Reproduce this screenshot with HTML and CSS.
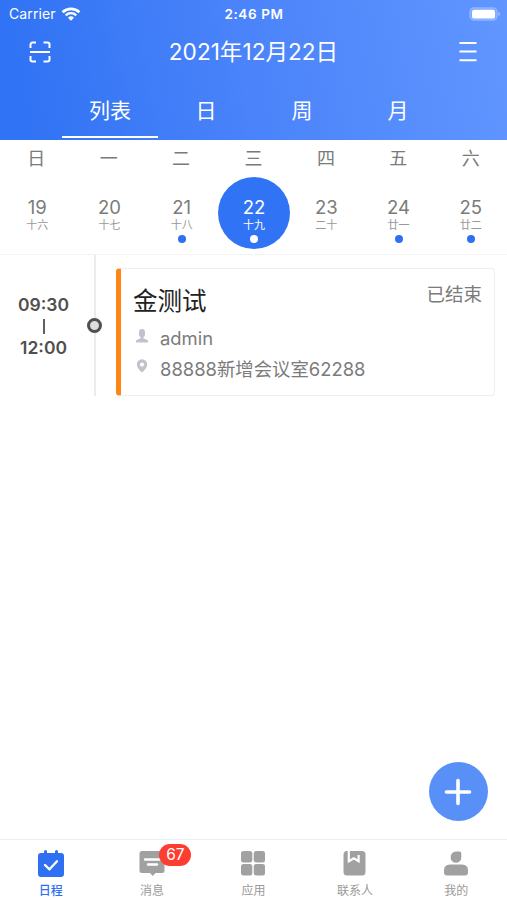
FILE: index.html
```html
<!DOCTYPE html>
<html lang="zh-CN">
<head>
    <meta charset="UTF-8">
    <meta name="viewport" content="width=device-width, initial-scale=1.0">
    <title>日程</title>
    <link rel="stylesheet" href="styles.css">
</head>
<body>
    <header class="header">
        <div class="status-bar">
            <div class="carrier">
                <span>Carrier</span>
                <svg width="20" height="14" viewBox="0 0 20 14">
                    <path d="M1.6 5.2a12.2 12.2 0 0 1 16.8 0" fill="none" stroke="#fff" stroke-width="2.7"/>
                    <path d="M4.7 8.3a7.7 7.7 0 0 1 10.6 0" fill="none" stroke="#fff" stroke-width="2.3"/>
                    <path d="M10 13.8 7 10.8a4.3 4.3 0 0 1 6 0z" fill="#fff"/>
                </svg>
            </div>
            <div class="time">2:46 PM</div>
            <div class="battery">
                <svg width="32" height="14" viewBox="0 0 32 14">
                    <rect x="0.8" y="0.8" width="27.4" height="12.4" rx="4" fill="#fff" fill-opacity="0.2" stroke="#fff" stroke-opacity="0.2" stroke-width="1.4"/>
                    <rect x="3" y="2.8" width="23" height="8.8" rx="2.2" fill="#fff"/>
                    <path d="M29.5 5v4q1.6-.6 1.6-2t-1.6-2z" fill="#fff" fill-opacity="0.45"/>
                </svg>
            </div>
        </div>

        <div class="title-bar">
            <svg width="22" height="22" viewBox="0 0 22 22" fill="none" stroke="#fff" stroke-width="2">
                <path d="M1.5 7V3.5a2 2 0 0 1 2-2H7M14.5 1.5h4a2 2 0 0 1 2 2V7M1.5 15v3.5a2 2 0 0 0 2 2H7M14.5 20.5h4a2 2 0 0 0 2-2V15M1 11h20"/>
            </svg>
            <h1>2021年12月22日</h1>
            <svg width="18" height="22" viewBox="0 0 18 22" stroke="#fff" stroke-width="2">
                <path d="M.5 2H17.5M.5 10.6H17.5M.5 19.2H17.5"/>
            </svg>
        </div>

        <nav class="tabs">
            <a class="tab active">列表</a>
            <a class="tab">日</a>
            <a class="tab">周</a>
            <a class="tab">月</a>
        </nav>
    </header>

    <section class="calendar">
        <div class="weekdays">
            <span>日</span><span>一</span><span>二</span><span>三</span><span>四</span><span>五</span><span>六</span>
        </div>
        <div class="days">
            <div class="day"><b>19</b><small>十六</small></div>
            <div class="day"><b>20</b><small>十七</small></div>
            <div class="day"><b>21</b><small>十八</small><i class="dot"></i></div>
            <div class="day selected"><b>22</b><small>十九</small><i class="dot"></i></div>
            <div class="day"><b>23</b><small>二十</small></div>
            <div class="day"><b>24</b><small>廿一</small><i class="dot"></i></div>
            <div class="day"><b>25</b><small>廿二</small><i class="dot"></i></div>
        </div>
    </section>

    <main class="schedule">
        <div class="event">
            <div class="event-time">
                <span>09:30</span>
                <span class="bar"></span>
                <span>12:00</span>
            </div>
            <div class="timeline"><span class="node"></span></div>
            <div class="card">
                <div class="card-head">
                    <h2>金测试</h2>
                    <span class="state">已结束</span>
                </div>
                <div class="info">
                    <svg width="12" height="14" viewBox="0 0 12 14" fill="#bfc3cc">
                        <rect x="3" y="0" width="6" height="8.2" rx="3"/>
                        <path d="M4.6 7h2.8v2.2l4 1.8q.6.4.6 1V13.6H0V12q0-.6.6-1l4-1.8z"/>
                    </svg>
                    <span>admin</span>
                </div>
                <div class="info">
                    <svg width="12" height="14" viewBox="0 0 12 14" fill="#bfc3cc">
                        <path fill-rule="evenodd" d="M6 .3a5.2 5.2 0 0 1 5.2 5.2c0 3-2.7 5.7-5.2 8-2.5-2.3-5.2-5-5.2-8A5.2 5.2 0 0 1 6 .3zm0 3.2a2.1 2.1 0 1 0 0 4.2 2.1 2.1 0 0 0 0-4.2z"/>
                    </svg>
                    <span>88888新增会议室62288</span>
                </div>
            </div>
        </div>
    </main>

    <button class="add">
        <svg width="28" height="28" viewBox="0 0 28 28" stroke="#fff" stroke-width="3.6" stroke-linecap="round">
            <path d="M14 2.5V25.5M2.5 14H25.5"/>
        </svg>
    </button>

    <footer class="tabbar">
        <a class="item active">
            <svg width="28" height="28" viewBox="0 0 28 28">
                <path d="M4 3h3V1.5a1.5 1.5 0 0 1 3 0V3h8V1.5a1.5 1.5 0 0 1 3 0V3h3a3 3 0 0 1 3 3v18a3 3 0 0 1-3 3H4a3 3 0 0 1-3-3V6a3 3 0 0 1 3-3z" fill="#2f6ff2"/>
                <path d="M8 15l4.500 4.300 7.500-8" fill="none" stroke="#fff" stroke-width="2.400" stroke-linecap="round" stroke-linejoin="round"/>
            </svg>
            <span>日程</span>
        </a>
        <a class="item">
            <svg width="28" height="28" viewBox="0 0 28 28">
                <path d="M4 1h20a2.5 2.5 0 0 1 2.5 2.5v17A2.5 2.5 0 0 1 24 23h-6.5L14.800 26 12 23H4a2.5 2.5 0 0 1-2.5-2.5v-17A2.5 2.5 0 0 1 4 1z" fill="#a1a1a1"/>
                <path d="M7 9.5h15M10 14.5h9" stroke="#fff" stroke-width="2.4" stroke-linecap="round"/>
            </svg>
            <em class="badge">67</em>
            <span>消息</span>
        </a>
        <a class="item">
            <svg width="28" height="28" viewBox="0 0 28 28" fill="#a1a1a1">
                <rect x="2" y="1" width="11.3" height="11.5" rx="2.5"/>
                <rect x="14.7" y="1" width="11.3" height="11.5" rx="2.5"/>
                <rect x="2" y="14" width="11.3" height="11.5" rx="2.5"/>
                <rect x="14.7" y="14" width="11.3" height="11.5" rx="2.5"/>
            </svg>
            <span>应用</span>
        </a>
        <a class="item">
            <svg width="28" height="28" viewBox="0 0 28 28">
                <rect x="2.5" y="1" width="22" height="24.5" rx="3.5" fill="#a1a1a1"/>
                <path d="M7.800 1v10.200l5-3 4.800 3V5" fill="none" stroke="#fff" stroke-width="2.200"/>
            </svg>
            <span>联系人</span>
        </a>
        <a class="item">
            <svg width="28" height="28" viewBox="0 0 28 28" fill="#a1a1a1">
                <path d="M14 1.5h3.5q1.8 0 1.8 2v4a5.3 5.3 0 0 1-10.6 0A5.5 5.5 0 0 1 14 1.5z"/>
                <path d="M8 14.5h12q6 0 6 6v2q0 3-3 3H5q-3 0-3-3v-2q0-6 6-6z"/>
            </svg>
            <span>我的</span>
        </a>
    </footer>
</body>
</html>
```

FILE: styles.css
```css
* {
    margin: 0;
    padding: 0;
    box-sizing: border-box;
}

body {
    display: flex;
    flex-direction: column;
    height: 100vh;
    background: #fff;
    color: #7b7b7b;
    font-family: Inter, 'Noto Sans CJK SC', sans-serif;
    overflow: hidden;
}

svg {
    display: block;
    flex: none;
}

.header {
    height: 140px;
    background: linear-gradient(80deg, #3073f4 5%, #4a83fa 48%, #6196ff 100%);
    color: #fff;
}

.status-bar {
    display: grid;
    grid-template-columns: 1fr auto 1fr;
    align-items: center;
    height: 27px;
    padding: 0 6px 0 9px;
}

.carrier {
    display: flex;
    align-items: center;
    gap: 5px;
    font-size: 14px;
    letter-spacing: 0.1px;
}

.time {
    margin-left: -2px;
    font-size: 13.5px;
    font-weight: 600;
    letter-spacing: 0.6px;
}

.battery {
    justify-self: end;
}

.title-bar {
    display: flex;
    align-items: center;
    justify-content: space-between;
    height: 50px;
    padding: 0 30px 0 29px;
}

.title-bar h1 {
    margin: -3px 0 0 -3px;
    font-size: 22.6px;
    font-weight: 400;
}

.tabs {
    display: flex;
    height: 61px;
    padding-left: 62px;
}

.tab {
    width: 96px;
    height: 61px;
    font-size: 21px;
    line-height: 67px;
    text-align: center;
}

.tab.active {
    border-bottom: 2px solid #fff;
}

.calendar {
    height: 115px;
    border-bottom: 1px solid #f3f3f3;
}

.weekdays,
.days {
    display: grid;
    grid-template-columns: repeat(7, 1fr);
    text-align: center;
}

.weekdays {
    height: 37px;
    font-size: 18px;
    line-height: 38px;
}

.days {
    padding-left: 1px;
}

.day {
    display: flex;
    flex-direction: column;
    align-items: center;
    justify-self: center;
    width: 72px;
    height: 72px;
    padding-top: 19px;
}

.day b {
    font-size: 18.5px;
    font-weight: 400;
    line-height: 23px;
}

.day small {
    font-size: 11px;
    line-height: 13px;
    color: #999;
}

.dot {
    width: 8px;
    height: 8px;
    margin-top: 3px;
    border-radius: 50%;
    background: #2f6ff2;
}

.day.selected,
.day.selected small {
    color: #fff;
}

.day.selected {
    border-radius: 50%;
    background: #3074f5;
}

.day.selected .dot {
    background: #fff;
}

.schedule {
    flex: 1;
}

.event {
    display: flex;
    height: 141px;
    padding-right: 12px;
}

.event-time {
    display: flex;
    flex-direction: column;
    align-items: center;
    justify-content: center;
    width: 87px;
    padding-top: 2px;
    color: #505050;
    font-size: 17.5px;
    font-weight: 600;
    line-height: 22px;
}

.event-time .bar {
    width: 2px;
    height: 15px;
    margin: 3px 0;
    background: #606060;
}

.timeline {
    display: flex;
    align-items: center;
    justify-content: center;
    width: 15px;
    background: linear-gradient(#ebebeb, #ebebeb) center / 2px 100% no-repeat;
}

.node {
    width: 15px;
    height: 15px;
    border: 3px solid #505050;
    border-radius: 50%;
    background: #ddd;
}

.card {
    flex: 1;
    margin: 13px 0 0 14px;
    padding: 13px 12px 0 12px;
    border: 1px solid #efefef;
    border-left: 5px solid #ff8512;
    border-radius: 4px;
}

.card-head {
    display: flex;
    justify-content: space-between;
    height: 41px;
}

.card-head h2 {
    color: #222;
    font-size: 24.5px;
    font-weight: 400;
    line-height: 39px;
}

.state {
    font-size: 18.5px;
    line-height: 25px;
}

.info {
    display: flex;
    align-items: center;
    gap: 12px;
    height: 30px;
    padding-left: 3px;
    font-size: 18.4px;
}

.info svg {
    margin-top: -4px;
}

.add {
    display: flex;
    align-items: center;
    justify-content: center;
    align-self: flex-end;
    width: 59px;
    height: 59px;
    margin: 0 19.5px 18px 0;
    border: 0;
    border-radius: 50%;
    background: #5990f8;
}

.tabbar {
    display: grid;
    grid-template-columns: repeat(5, 1fr);
    height: 61px;
    border-top: 1px solid #ededed;
}

.item {
    position: relative;
    display: flex;
    flex-direction: column;
    align-items: center;
    padding-top: 10px;
    color: #999;
    font-size: 12px;
    line-height: 18px;
}

.item span {
    margin-top: 4px;
}

.item.active {
    color: #2f6ff2;
    font-weight: 500;
}

.badge {
    position: absolute;
    top: 4px;
    left: 58px;
    width: 32px;
    height: 22px;
    border-radius: 11px;
    background: #fc3d32;
    color: #fff;
    font-size: 15.5px;
    font-style: normal;
    line-height: 22px;
    text-align: center;
}
```
